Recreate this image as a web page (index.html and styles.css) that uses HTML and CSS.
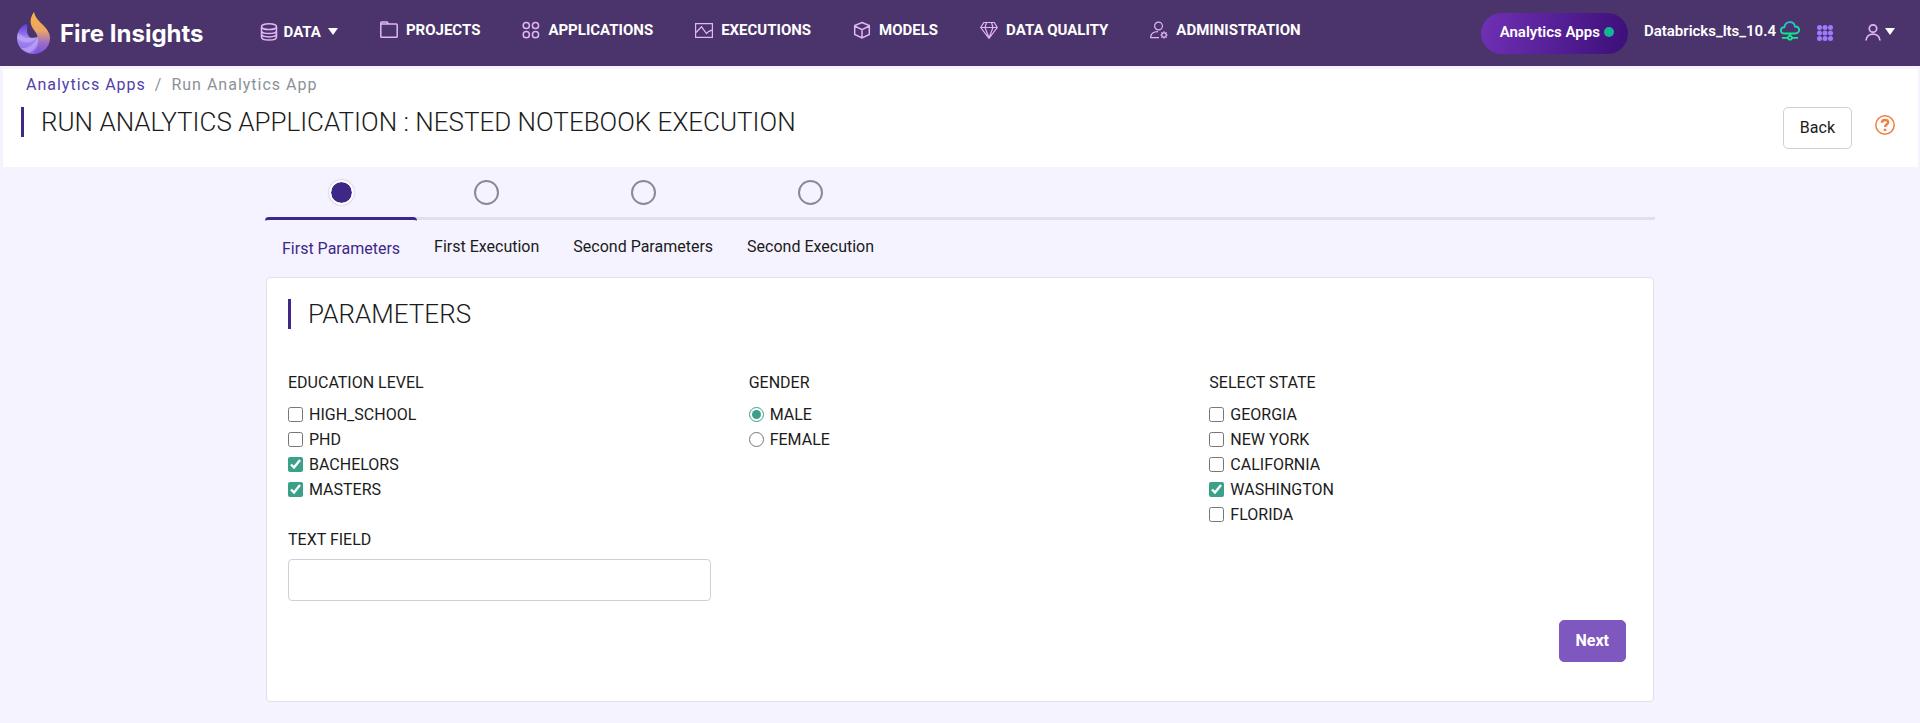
FILE: index.html
```html
<!DOCTYPE html>
<html lang="en">
<head>
<meta charset="utf-8">
<meta name="viewport" content="width=device-width, initial-scale=1">
<title>Fire Insights - Run Analytics App</title>
<link rel="stylesheet" href="styles.css">
</head>
<body>
<header class="topbar">
  <a class="brand" href="#">
    <svg class="brand-mark" viewBox="0 0 34 42" aria-hidden="true">
      <defs>
        <linearGradient id="flame" x1="0" y1="0" x2="0" y2="1">
          <stop offset="0" stop-color="#fdb045"/><stop offset=".45" stop-color="#eaa468"/><stop offset=".75" stop-color="#9a6bc9"/><stop offset="1" stop-color="#7a4fe0"/>
        </linearGradient>
        <linearGradient id="swirl" x1="0" y1="0" x2="0" y2="1">
          <stop offset="0" stop-color="#5f3be0"/><stop offset=".5" stop-color="#a58af0"/><stop offset="1" stop-color="#8a68ea"/>
        </linearGradient>
      </defs>
      <path fill="url(#swirl)" d="M9 12C3 15 0 20 0 26c0 9 7 16 17 16 5 0 9-4 7-10l-2-10c-1 4-4 4-6 4-5 0-6-5-6-8 0-3 1-6-1-6z"/>
      <path fill="#c9b8f8" opacity=".5" d="M1 21c4 1 6 6 13 5l6-1c-3 6-13 8-20 1z"/>
      <path fill="#cdbdfa" opacity=".5" d="M4 36c6 1 13-3 17-11 1 7-3 13-9 16-3-1-6-3-8-5z"/>
      <path fill="url(#flame)" d="M17 0c-5 7-4 13 0 18 5 6 7 15-1 24 10 0 17-7 17-16 0-5-3-9-8-14-4-4-7-7-8-12z"/>
    </svg>
    <span>Fire Insights</span>
  </a>

  <nav class="menu" aria-label="Main">
    <a class="menu-item menu-item-data" href="#">
      <svg class="icon icon-data" viewBox="0 0 18 18" aria-hidden="true"><ellipse cx="9" cy="3.700" rx="7.500" ry="2.900"/><path d="M1.500 4v10c0 1.800 3 3.100 7.500 3.100s7.500-1.300 7.500-3.100V4M1.500 7.400c0 1.800 3 3.100 7.500 3.100s7.500-1.300 7.500-3.100M1.500 10.800c0 1.800 3 3.100 7.500 3.100s7.500-1.300 7.500-3.100"/></svg>
      <span>DATA</span>
      <svg class="caret" viewBox="0 0 10 7" aria-hidden="true"><path d="M0 0h10L5 7z"/></svg>
    </a>
    <a class="menu-item" href="#">
      <svg class="icon" viewBox="0 0 18 18" aria-hidden="true"><path d="M.8 16V1.800q0-.8.800-.8H7l1.500 2H16.400q.8 0 .8.800V15.400q0 .8-.8.800H1.600q-.8 0-.8-.8M1 3h8"/></svg>
      <span>PROJECTS</span>
    </a>
    <a class="menu-item" href="#">
      <svg class="icon" viewBox="0 0 18 18" aria-hidden="true"><circle cx="4.300" cy="4.500" r="3.100"/><circle cx="13.500" cy="4.500" r="3.100"/><circle cx="4.300" cy="13.700" r="3.100"/><circle cx="13.500" cy="13.700" r="3.100"/></svg>
      <span>APPLICATIONS</span>
    </a>
    <a class="menu-item" href="#">
      <svg class="icon icon-thin" viewBox="0 0 18 18" aria-hidden="true"><path d="M.6 2.600h16.800v13.800H.6zM1 11.500l5.500-5.700 5 6.800 2-2 3.500-1.500"/></svg>
      <span>EXECUTIONS</span>
    </a>
    <a class="menu-item" href="#">
      <svg class="icon" viewBox="0 0 18 18" aria-hidden="true"><path d="M9 1.500l7.300 3v9L9 17l-7.300-3.500v-9zM1.700 5L9 8.700 16.300 5M9 8.700V17"/></svg>
      <span>MODELS</span>
    </a>
    <a class="menu-item" href="#">
      <svg class="icon icon-thin" viewBox="0 0 18 18" aria-hidden="true"><path d="M3.800 1.500h10.400L17.300 6.500 9 17.300.7 6.500zM.7 6.500h16.600M6.500 1.500L5 6.500l4 10.500 4-10.500-1.500-5"/></svg>
      <span>DATA QUALITY</span>
    </a>
    <a class="menu-item" href="#">
      <svg class="icon icon-thin" viewBox="0 0 18 18" aria-hidden="true"><circle cx="8.500" cy="5" r="3.900"/><path d="M9 16.700H.7c0-4 2-6 7.300-6"/><circle cx="14" cy="14" r="2.200"/><path d="M14 10.300v1.500M14 16.200v1.500M10.300 14h1.500M16.200 14h1.500M11.400 11.400l1 1M15.600 15.600l1 1M16.600 11.400l-1 1M12.400 15.600l-1 1"/></svg>
      <span>ADMINISTRATION</span>
    </a>
  </nav>

  <div class="tools">
    <a class="pill" href="#">Analytics Apps<span class="pill-dot"></span></a>
    <a class="cluster" href="#">
      <span>Databricks_lts_10.4</span>
      <svg class="cloud" viewBox="0 0 20 20" aria-hidden="true">
        <defs><linearGradient id="cloud" x1="0" y1="0" x2="0" y2="1"><stop offset="0" stop-color="#27c3d0"/><stop offset=".7" stop-color="#12e29a"/></linearGradient></defs>
        <path fill="none" stroke="url(#cloud)" stroke-width="1.800" d="M5 12.500C-.4 12.500-.4 6.500 4.500 6 5.500-.4 14-.4 15 5.500c5.500.2 5.500 7 0 7z"/>
        <path fill="none" stroke="#10ea92" stroke-width="1.800" d="M10 12.500V15M2 16.800h6M12 16.800h6"/><circle cx="10" cy="16.800" r="1.900" fill="none" stroke="#10ea92" stroke-width="1.800"/>
      </svg>
    </a>
    <button class="icon-button" type="button" aria-label="Apps">
      <svg class="grid-icon" viewBox="0 0 16 16" aria-hidden="true"><g><circle cx="2.500" cy="2.500" r="2.500"/><circle cx="8" cy="2.500" r="2.500"/><circle cx="13.500" cy="2.500" r="2.500"/><circle cx="2.500" cy="8" r="2.500"/><circle cx="8" cy="8" r="2.500"/><circle cx="13.500" cy="8" r="2.500"/><circle cx="2.500" cy="13.500" r="2.500"/><circle cx="8" cy="13.500" r="2.500"/><circle cx="13.500" cy="13.500" r="2.500"/></g></svg>
    </button>
    <button class="icon-button user" type="button" aria-label="Account">
      <svg class="user-icon" viewBox="0 0 16 18" aria-hidden="true"><circle cx="8" cy="5.500" r="3.700"/><path d="M1 17.500c.5-8.500 13.500-8.500 14 0"/></svg>
      <svg class="caret" viewBox="0 0 10 7" aria-hidden="true"><path d="M0 0h10L5 7z"/></svg>
    </button>
  </div>
</header>

<section class="page-head">
  <nav class="crumbs" aria-label="Breadcrumb">
    <a href="#">Analytics Apps</a><span>/</span><span>Run Analytics App</span>
  </nav>
  <div class="title-row">
    <h1 class="heading">RUN ANALYTICS APPLICATION : NESTED NOTEBOOK EXECUTION</h1>
    <div class="title-actions">
      <button class="button" type="button">Back</button>
      <a class="help" href="#" aria-label="Help">
        <svg viewBox="0 0 20 20" aria-hidden="true"><circle cx="10" cy="10" r="9.200" stroke-width="1.500"/><path stroke-width="2.500" d="M6.900 7.800c.2-3.800 6.300-3.600 6.200-.3 0 2-3 2.200-3 4.500"/><path stroke-width="2.500" d="M10 13.700v2.300"/></svg>
      </a>
    </div>
  </div>
</section>

<main class="content">
  <ol class="steps">
    <li class="step step-active"><span class="step-dot"></span><a class="step-label" href="#">First Parameters</a></li>
    <li class="step"><span class="step-dot"></span><a class="step-label" href="#">First Execution</a></li>
    <li class="step"><span class="step-dot"></span><a class="step-label" href="#">Second Parameters</a></li>
    <li class="step"><span class="step-dot"></span><a class="step-label" href="#">Second Execution</a></li>
  </ol>

  <form class="card">
    <h2 class="heading">PARAMETERS</h2>
    <div class="fields">
      <fieldset class="field">
        <legend class="field-label">EDUCATION LEVEL</legend>
        <label class="option"><input type="checkbox" name="education">HIGH_SCHOOL</label>
        <label class="option"><input type="checkbox" name="education">PHD</label>
        <label class="option"><input type="checkbox" name="education" checked>BACHELORS</label>
        <label class="option"><input type="checkbox" name="education" checked>MASTERS</label>
      </fieldset>
      <fieldset class="field">
        <legend class="field-label">GENDER</legend>
        <label class="option"><input type="radio" name="gender" checked>MALE</label>
        <label class="option"><input type="radio" name="gender">FEMALE</label>
      </fieldset>
      <fieldset class="field">
        <legend class="field-label">SELECT STATE</legend>
        <label class="option"><input type="checkbox" name="state">GEORGIA</label>
        <label class="option"><input type="checkbox" name="state">NEW YORK</label>
        <label class="option"><input type="checkbox" name="state">CALIFORNIA</label>
        <label class="option"><input type="checkbox" name="state" checked>WASHINGTON</label>
        <label class="option"><input type="checkbox" name="state">FLORIDA</label>
      </fieldset>
      <div class="field">
        <label class="field-label" for="text-field">TEXT FIELD</label>
        <input class="text-input" id="text-field" type="text">
      </div>
    </div>
    <div class="card-actions"><button class="button button-primary" type="button">Next</button></div>
  </form>
</main>
</body>
</html>
```
FILE: styles.css
```css
* { box-sizing: border-box; }

body {
  margin: 0;
  background: #f5f3ff;
  color: #1b1b1b;
  font: 16px/24px Roboto, "Liberation Sans", sans-serif;
}

a { text-decoration: none; }
button, input { font: inherit; }

.topbar {
  display: flex;
  align-items: center;
  min-height: 66px;
  padding: 0 25px 0 17px;
  background: #4a346b;
  font-size: 15px;
  font-weight: 700;
}
.topbar a { color: #fff; }

.brand {
  display: flex;
  align-items: center;
  gap: 9px;
  font: 700 24px/32px Inter, sans-serif;
}
.brand span { padding-top: 2px; }
.brand-mark { width: 34px; height: 42px; }

.menu {
  display: flex;
  gap: 42px;
  margin-left: 56px;
  padding-bottom: 6px;
}
.menu-item { display: flex; align-items: center; gap: 8px; }
.menu-item-data { gap: 6px; padding-top: 3px; }
.menu-item .caret { margin-left: 1px; }
.icon {
  width: 18px;
  height: 18px;
  fill: none;
  stroke: #e2b6f5;
  stroke-width: 1.5;
}
.icon-thin { stroke-width: 1.2; }
.caret { width: 10px; height: 7px; fill: #fff; }

.tools {
  display: flex;
  align-items: center;
  margin-left: auto;
  font-weight: 600;
}
.pill {
  display: flex;
  align-items: center;
  gap: 4px;
  height: 41px;
  padding: 0 14px 2px 19px;
  border-radius: 21px;
  background: linear-gradient(100deg, #7030b5, #3c0f78);
}
.pill-dot { width: 10px; height: 10px; border-radius: 50%; background: #13b497; }
.cluster {
  display: flex;
  align-items: center;
  gap: 4px;
  margin: 0 17px 0 16px;
  padding-bottom: 4px;
}
.cloud { width: 20px; height: 20px; }
.icon-button {
  display: flex;
  padding: 0;
  border: 0;
  background: none;
}
.grid-icon { width: 16px; height: 16px; fill: #9b7bff; }
.user { gap: 4px; margin-left: 32px; padding-bottom: 3px; align-items: center; }
.user-icon {
  width: 16px;
  height: 18px;
  fill: none;
  stroke: #e2b6f5;
  stroke-width: 1.7;
}

.page-head {
  margin: 3px 2px 0 3px;
  padding: 4px 23px 18px 18px;
  background: #fff;
}
.crumbs {
  display: flex;
  gap: 9px;
  padding-left: 5px;
  color: #8a9299;
  letter-spacing: 1px;
}
.crumbs a { color: #5140a8; }
.title-row { display: flex; justify-content: space-between; margin-top: 10px; }
.heading {
  align-self: flex-start;
  margin: 0;
  padding-left: 17px;
  border-left: 3px solid #3f2787;
  font-size: 26px;
  font-weight: 300;
  line-height: 30px;
}
.title-actions { display: flex; align-items: center; gap: 23px; }
.button {
  height: 42px;
  padding: 0 16px;
  border: 1px solid #ced0da;
  border-radius: 5px;
  background: #fff;
  color: #1b1b1b;
}
.button-primary {
  border-color: #7e57bf;
  background: #7e57bf;
  color: #fff;
  font-weight: 700;
}
.help { padding-bottom: 6px; }
.help svg {
  display: block;
  width: 20px;
  height: 20px;
  fill: none;
  stroke: #f47c3c;
}

.content { max-width: 1390px; margin: 0 auto; padding: 13px 0 21px; }
.steps {
  display: flex;
  margin: 0 0 16px;
  padding: 0;
  list-style: none;
  background: linear-gradient(#dfe1e7, #dfe1e7) 0 37px / 100% 3px no-repeat;
}
.step {
  display: flex;
  flex-direction: column;
  align-items: center;
}
.step-dot {
  width: 25px;
  height: 25px;
  border: 2px solid #8b8b8f;
  border-radius: 50%;
}
.step-label { padding: 30px 17px 0; color: #1b1b1b; line-height: 24px; }
.step-active .step-dot {
  border-color: #fff;
  background: #3f2787;
  background-clip: padding-box;
  box-shadow: 0 0 2px #aaa;
}
.step-active .step-label {
  margin-top: 12px;
  padding-top: 17px;
  border-top: 3px solid #3f2787;
  border-radius: 4px 4px 0 0;
  color: #3f2787;
}

.card {
  margin: 0 1px;
  padding: 21px 21px 39px;
  border: 1px solid #e0e0e3;
  border-radius: 4px;
  background: #fff;
}
.fields {
  display: grid;
  grid-template-columns: repeat(3, 1fr);
  gap: 1px 38px;
  margin-top: 42px;
}
.field { min-width: 0; margin: 0; padding: 0; border: 0; }
.field-label { display: block; padding: 0 0 7px; line-height: 24px; }
.option {
  display: flex;
  align-items: center;
  gap: 6px;
  line-height: 25px;
}
.option input { width: 15px; height: 15px; margin: 0; accent-color: #3aa087; }
.text-input {
  display: block;
  width: 100%;
  height: 42px;
  padding: 0 12px;
  border: 1px solid #ced0da;
  border-radius: 4px;
  background: #fff;
}
.card-actions { display: flex; justify-content: flex-end; margin-top: 19px; padding-right: 6px; }

@media (max-width: 1500px) {
  .topbar { flex-wrap: wrap; gap: 12px; }
  .menu { flex-wrap: wrap; gap: 12px 24px; margin-left: 24px; }
  .content { padding-left: 16px; padding-right: 16px; }
}
@media (max-width: 760px) {
  .fields { grid-template-columns: 1fr; row-gap: 16px; }
  .steps { overflow-x: auto; }
}
```
